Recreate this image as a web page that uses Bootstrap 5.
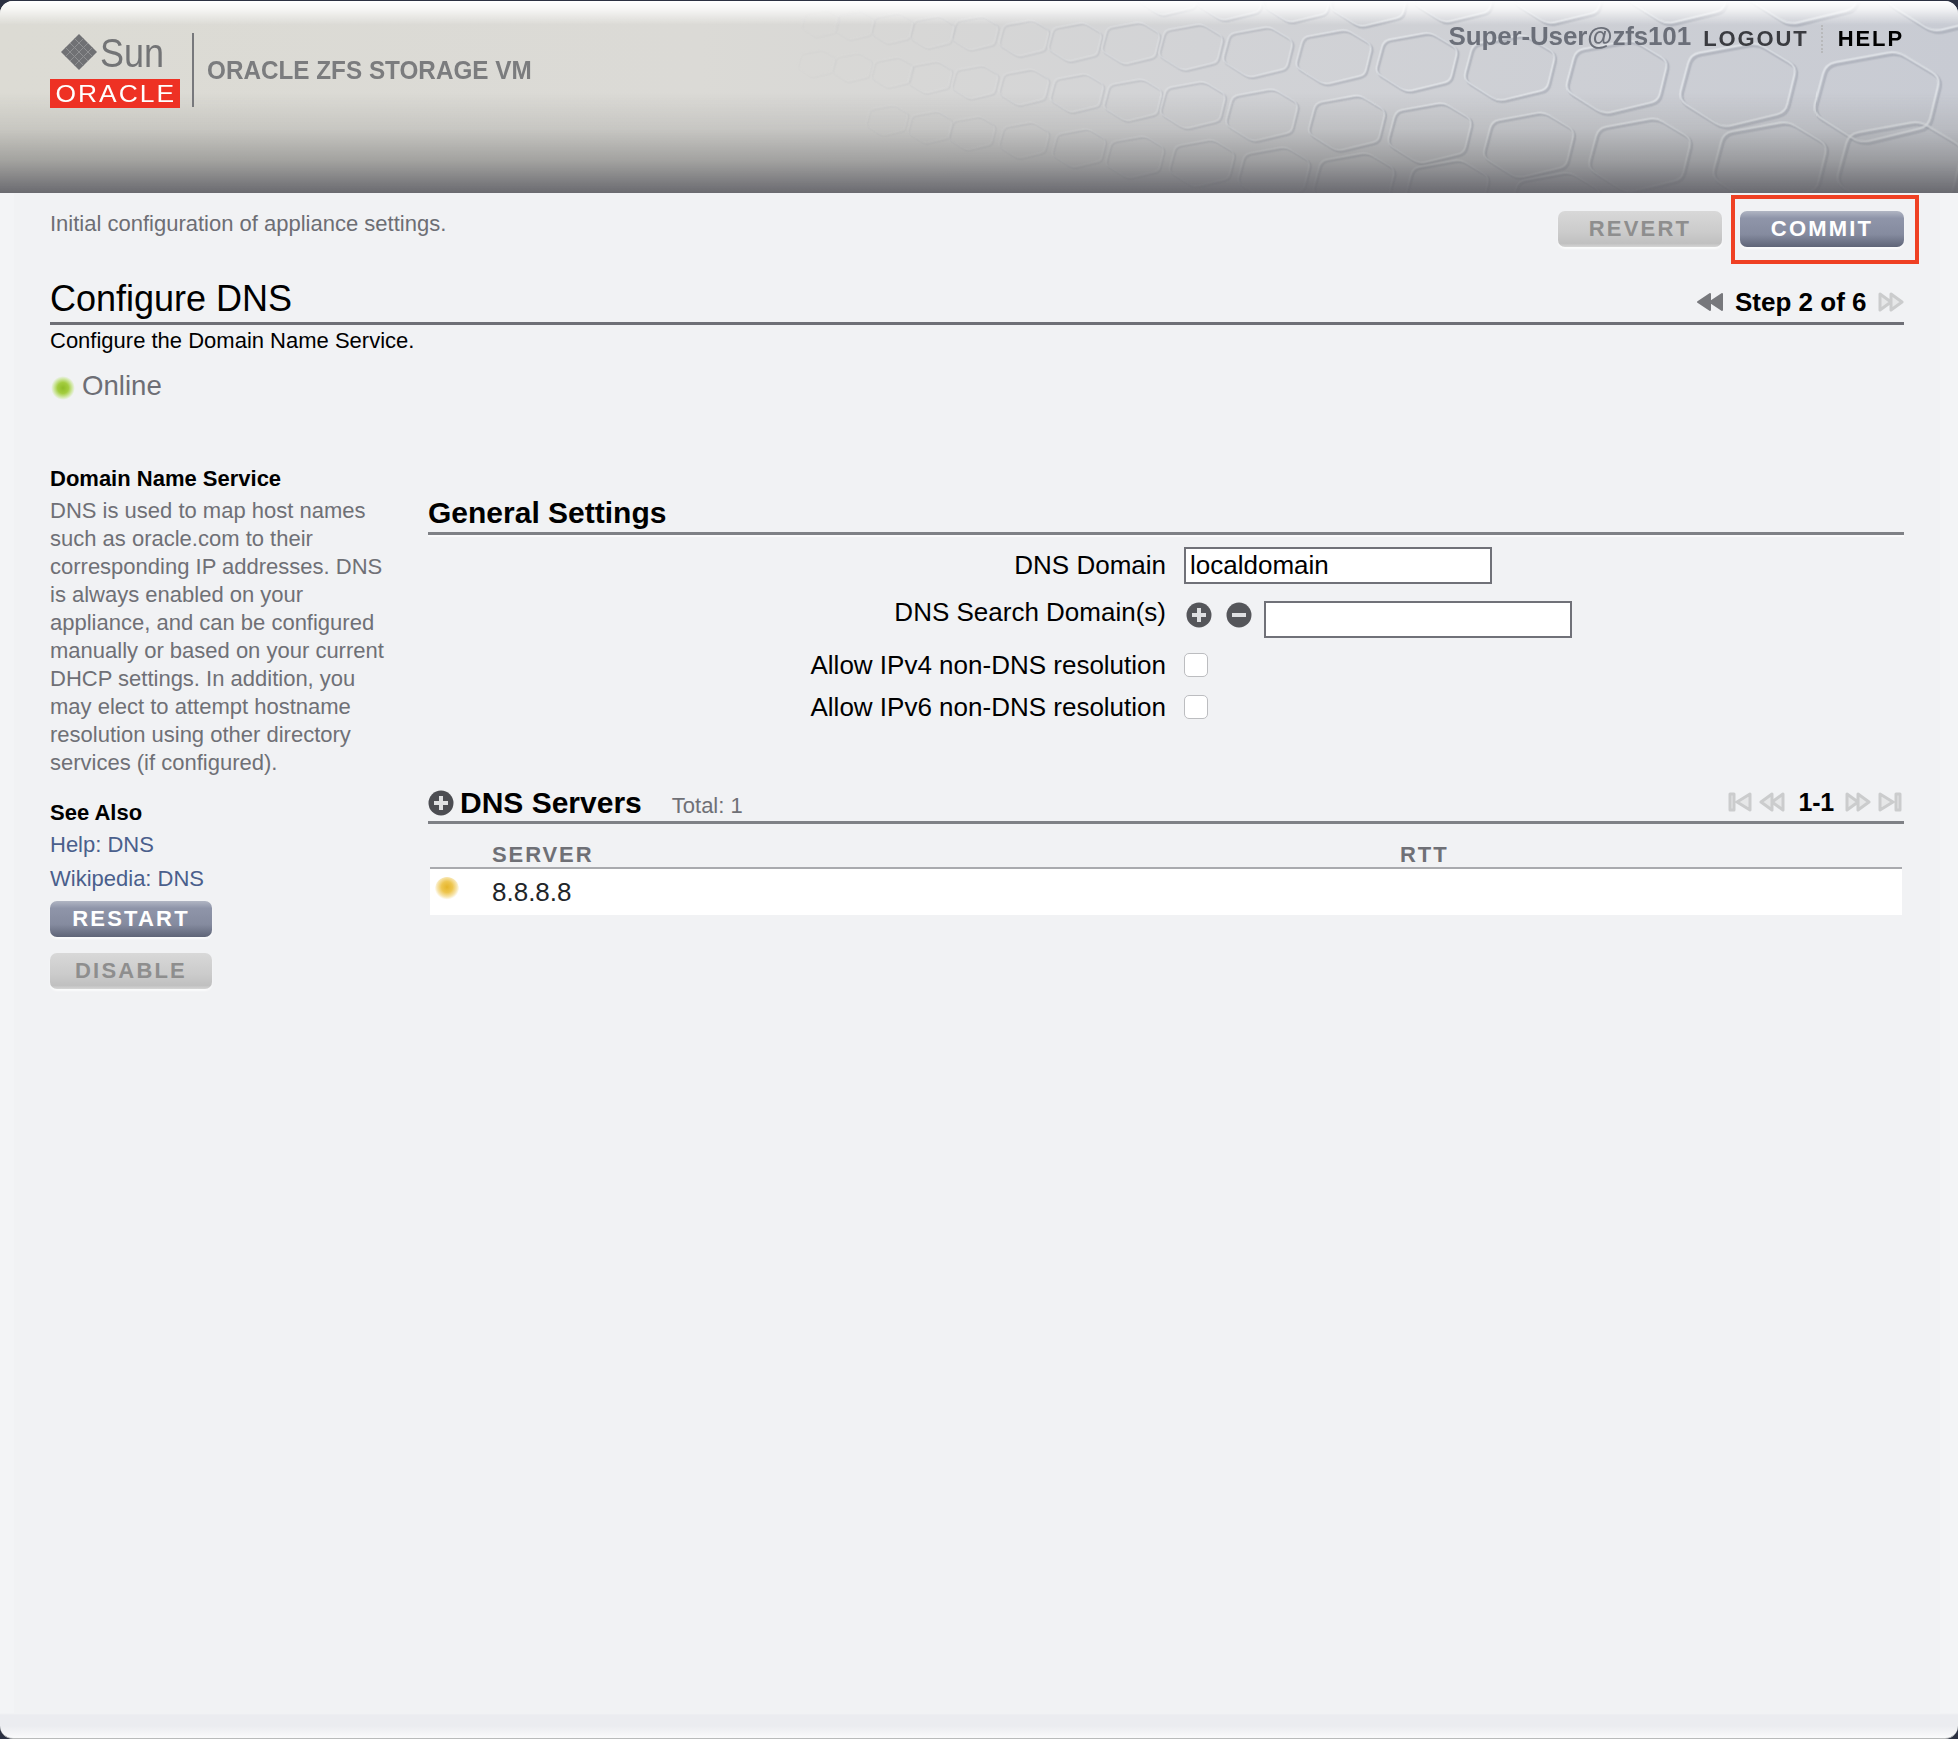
<!DOCTYPE html>
<html lang="en">
<head>
<meta charset="utf-8">
<title>Configure DNS</title>
<link href="https://cdn.jsdelivr.net/npm/bootstrap@5.3.0/dist/css/bootstrap.min.css" rel="stylesheet">
<style>
html,body{height:100%}
body{background:#2c3142;font-family:"Liberation Sans",Arial,sans-serif;color:#000;padding-top:1px}
.zs-page{width:1958px;height:1738px;background:linear-gradient(to bottom,#f3f4f6 0,#f3f4f6 1712px,#ebecf0 1714px,#ebecf0 1725px,#fafafb 1737px);border-radius:13px;border-bottom:1px solid #b9bbbb;overflow:hidden;position:relative}
.zs-head{height:192px;position:relative;overflow:hidden;background:linear-gradient(to right,#dcdbd4 0,#dbdad6 700px,#d2d3d6 1200px,#c8cbd3 1958px)}
.zs-head-art{position:absolute;left:0;top:-1px}
.zs-head::after{content:"";position:absolute;inset:0;background:linear-gradient(to bottom,#fff 0,rgba(255,255,255,.75) 8px,rgba(255,255,255,0) 24px,rgba(200,200,200,0) 92px,rgba(130,130,128,.22) 128px,rgba(110,110,110,.52) 160px,rgba(100,100,106,.95) 192px)}
.zs-head-in{position:relative;z-index:2;height:100%}
.zs-logo{position:absolute;left:50px;top:32px;width:130px}
.zs-diamond{position:absolute;left:10px;top:0}
.zs-sun{position:absolute;left:50px;top:-2px;font-size:40px;line-height:44px;color:#737476;transform:scaleX(.9);transform-origin:left top}
.zs-oracle{position:absolute;left:0;top:46px;width:130px;height:29px;background:#ee3124;color:#fff;font-size:24px;line-height:30px;text-align:center;overflow:hidden;padding-left:2px}
.zs-oracle span{display:inline-block;letter-spacing:1.8px;transform:scaleX(1.1)}
.zs-vbar{position:absolute;left:192px;top:32px;width:2px;height:74px;background:#77787c}
.zs-product{position:absolute;left:207px;top:51px;font-size:26px;line-height:36px;font-weight:700;color:#7b7c7e;white-space:nowrap;transform:scaleX(.934);transform-origin:left top}
.zs-user{position:absolute;right:267px;top:17px;font-size:26px;line-height:36px;color:#6b6f79;font-weight:700;letter-spacing:-.15px}
.zs-toplinks{position:absolute;right:54px;top:24px;display:flex;align-items:center;font-size:22px;line-height:28px;font-weight:700;letter-spacing:1.9px}
.zs-toplinks a{color:#3a3b40;text-decoration:none}
.zs-toplinks a+a{color:#000;margin-left:12px;padding-left:15px;border-left:2px dotted #b8b9bb}
.zs-panel{margin:0 18px 0 14px;height:1520px;background:#f1f2f4;padding:0 36px}
.zs-top{height:87px;padding-top:18px}
.zs-desc{font-size:22px;line-height:26px;color:#6d6e74}
.zs-btn{--bs-btn-padding-x:0;--bs-btn-padding-y:0;border:0;width:164px;height:36px;border-radius:7px;font-size:22px;line-height:36px;font-weight:700;letter-spacing:2.2px;text-align:center;box-shadow:0 2px 2px rgba(255,255,255,.7)}
.zs-btn-on,.zs-btn-on:hover{color:#fff;background:linear-gradient(to bottom,#b0b5c3 0,#8f95a9 20%,#858b9f 65%,#5f6578 100%)}
.zs-btn-off,.zs-btn-off:disabled{color:#8e8e8e;opacity:1;background:linear-gradient(to bottom,#d8d8d8 0,#cbcbcb 60%,#c0c0c0 90%,#d5d5d5 100%)}
.zs-hilite{position:relative;margin-left:18px}
.zs-redbox{position:absolute;left:-9px;right:-15px;top:-16px;bottom:-17px;border:4px solid #ef4023;pointer-events:none}
.zs-title{height:45px;border-bottom:3px solid #6e6f76;margin:0}
.zs-title h1{font-size:36px;line-height:42px;font-weight:400;margin:0 0 2px}
.zs-step{font-size:26px;line-height:32px;font-weight:700;padding-bottom:4px;gap:10px}
.zs-step svg:first-child{margin-right:-3px}
.zs-step span{margin:0 1.500px 0 4px}
.zs-sub{font-size:22px;line-height:32px}
.zs-online{height:40px;margin-top:9px;margin-bottom:-1px;font-size:27.6px;color:#6d6e75;gap:7px}
.zs-dot{width:24px;height:24px;flex:none;border-radius:50%}
.zs-online .zs-dot{margin:3px 0 0 1px}
.zs-dot-green{background:radial-gradient(circle at 50% 50%,#8fbc28 0,#a3cd3f 32%,#d4e9ad 56%,rgba(241,242,244,0) 70%)}
.zs-dot-yellow{background:radial-gradient(circle at 50% 42%,#e5b52a 0,#eec650 30%,#f7e6b2 54%,rgba(255,255,255,0) 68%)}
.zs-cols{margin-top:60px}
.zs-side{width:378px;flex:none;padding-right:40px;font-size:22px;line-height:28px}
.zs-side h6{font-size:22px;line-height:28px;font-weight:700;margin:0 0 4px;white-space:nowrap}
.zs-side p{color:#6f7076;margin:0;white-space:nowrap}
.zs-side h6.zs-see{margin:22px 0 1px}
.zs-side a{display:block;height:34px;line-height:34px;color:#4a5f8c;text-decoration:none}
.zs-side .btn{display:block;width:162px;margin-top:16px}
.zs-side a+.btn{margin-top:5px}
.zs-main{flex:1 1 auto;min-width:0;padding-top:30px}
.zs-sect{height:40px;padding-bottom:2px;border-bottom:3px solid #7f8186;box-shadow:0 2px 0 #fafafb;display:flex;align-items:center;font-size:30px;font-weight:700;line-height:36px;margin:0}
.zs-form{padding-top:12px;font-size:26px}
.zs-lbl{width:738px;flex:none;text-align:right;white-space:nowrap}
.zs-r{display:flex}
.zs-field{width:308px;height:37px;border:2px solid #707178;border-radius:0;background:#fff;padding:0 4px;font:26px/33px "Liberation Sans",Arial,sans-serif;color:#000;margin-left:18px;outline:0}
.zs-r-1{height:37px;align-items:center}
.zs-r-2{height:37px;margin-top:17px;align-items:flex-start}
.zs-r-2 .zs-lbl{line-height:22px}
.zs-r-2 .zs-field{margin-left:12px}
.zs-tools{margin-left:20px;gap:14px;display:flex;margin-top:1px}
.zs-r-3{height:38px;align-items:center}
.zs-r-3.zs-first{margin-top:8px}
.zs-r-3+.zs-r-3{margin-top:4px}
.zs-check{width:24px;height:24px;margin:0 0 0 18px;flex:none;border:1px solid #bcbdc0;border-radius:5px;background:#fff}
.zs-srv{margin-top:58px;height:40px;border-bottom:3px solid #7f8186;display:flex;align-items:center;font-size:30px;font-weight:700;line-height:36px}
.zs-srv .zs-icon-p{margin-right:6px}
.zs-total{font-size:22px;font-weight:400;color:#6f7076;margin-left:30px;padding-top:6px}
.zs-pager{margin-left:auto;font-size:25px;font-weight:700;display:flex;align-items:center;gap:6px;padding-right:2px;margin-top:-2px}
.zs-pager b{margin:0 5px 0 7px;letter-spacing:-.2px}
.zs-tbl{margin:0 2px;width:1472px;--bs-table-bg:transparent;table-layout:fixed}
.zs-tbl th{height:44px;padding:0;border-bottom:2px solid #a9aaae;font-size:22px;line-height:24px;font-weight:700;color:#6f7076;letter-spacing:1.9px;vertical-align:bottom}
.zs-tbl td{height:47px;background:#fff;border:0;padding:0;font-size:26px;vertical-align:middle}
.zs-tbl td .zs-dot{margin:-7px 0 0 5px}
.zs-c1{width:62px}
.zs-c2{width:908px}
</style>
</head>
<body>
<div class="zs-page">
  <header class="zs-head">
    <svg class="zs-head-art" width="1958" height="194" viewBox="0 0 1958 194" aria-hidden="true">
      <defs>
        <path id="zh" d="M10.200-40.400Q19-42 26.700-37.400L51.300-22.600Q59-18 57-9.300L50 19.300Q48 28 39.300 30L-6.300 41Q-15 43-22.600 38.100L-51.400 19.900Q-59 15-56.700 6.300L-49.300-21.300Q-47-30-38.200-31.600Z"/>
        <linearGradient id="zf" x1="0" x2="1" y1="0" y2="0"><stop offset="0" stop-color="#000"/><stop offset=".38" stop-color="#000"/><stop offset=".55" stop-color="#777"/><stop offset=".72" stop-color="#fff"/></linearGradient>
        <mask id="zm" maskUnits="userSpaceOnUse" x="0" y="0" width="1958" height="194"><rect width="1958" height="194" fill="url(#zf)"/></mask>
        <g id="zg" fill="none">
          <use href="#zh" transform="translate(1738,85)"/><use href="#zh" transform="translate(1877,97) scale(1.08)"/><use href="#zh" transform="translate(1617,77) scale(.87)"/><use href="#zh" transform="translate(1510,68) scale(.78)"/><use href="#zh" transform="translate(1417,62) scale(.7)"/><use href="#zh" transform="translate(1334,57) scale(.65)"/><use href="#zh" transform="translate(1258,52) scale(.6)"/><use href="#zh" transform="translate(1191,47) scale(.55)"/><use href="#zh" transform="translate(1131,43) scale(.5)"/><use href="#zh" transform="translate(1075,42) scale(.46)"/><use href="#zh" transform="translate(1024,38) scale(.43)"/><use href="#zh" transform="translate(975,33) scale(.4)"/><use href="#zh" transform="translate(932,32) scale(.38)"/><use href="#zh" transform="translate(892,28) scale(.36)"/><use href="#zh" transform="translate(854,25) scale(.34)"/><use href="#zh" transform="translate(820,23) scale(.32)"/>
          <use href="#zh" transform="translate(1900,167) scale(1.08)"/><use href="#zh" transform="translate(1770,163) scale(.98)"/><use href="#zh" transform="translate(1640,155) scale(.88)"/><use href="#zh" transform="translate(1529,145) scale(.78)"/><use href="#zh" transform="translate(1430,133) scale(.72)"/><use href="#zh" transform="translate(1347,123) scale(.66)"/><use href="#zh" transform="translate(1262,115) scale(.62)"/><use href="#zh" transform="translate(1193,105) scale(.56)"/><use href="#zh" transform="translate(1133,100) scale(.5)"/><use href="#zh" transform="translate(1077,93) scale(.46)"/><use href="#zh" transform="translate(1024,87) scale(.43)"/><use href="#zh" transform="translate(975,82) scale(.4)"/><use href="#zh" transform="translate(930,77) scale(.38)"/><use href="#zh" transform="translate(892,72) scale(.36)"/><use href="#zh" transform="translate(852,67) scale(.34)"/><use href="#zh" transform="translate(816,63) scale(.32)"/>
          <use href="#zh" transform="translate(1354,182) scale(.7)"/><use href="#zh" transform="translate(1274,173) scale(.62)"/><use href="#zh" transform="translate(1202,163) scale(.56)"/><use href="#zh" transform="translate(1135,157) scale(.5)"/><use href="#zh" transform="translate(1079,148) scale(.46)"/><use href="#zh" transform="translate(1024,140) scale(.43)"/><use href="#zh" transform="translate(972,133) scale(.4)"/><use href="#zh" transform="translate(930,127) scale(.38)"/><use href="#zh" transform="translate(887,120) scale(.36)"/><use href="#zh" transform="translate(1447,190) scale(.72)"/><use href="#zh" transform="translate(1555,205) scale(.78)"/>
          <use href="#zh" transform="translate(1231,-5) scale(.6)"/><use href="#zh" transform="translate(1169,-8) scale(.55)"/><use href="#zh" transform="translate(1298,-3) scale(.6)"/><use href="#zh" transform="translate(1370,-2) scale(.68)"/><use href="#zh" transform="translate(1455,-8) scale(.72)"/><use href="#zh" transform="translate(1560,-10) scale(.8)"/><use href="#zh" transform="translate(1680,-15) scale(.92)"/><use href="#zh" transform="translate(1805,-20) scale(1.05)"/><use href="#zh" transform="translate(1950,-15) scale(1.1)"/>
        </g>
      </defs>
      <g mask="url(#zm)">
        <use href="#zg" stroke="#8f93a0" stroke-opacity=".38" stroke-width="3.6" transform="translate(1.2,1.4)"/>
        <use href="#zg" stroke="#eef0f3" stroke-opacity=".62" stroke-width="2.2" transform="translate(-.6,-.6)"/>
      </g>
    </svg>
    <div class="zs-head-in">
      <div class="zs-logo">
        <svg class="zs-diamond" width="38" height="38" viewBox="0 0 38 38" aria-hidden="true"><path d="M19 1 37 19 19 37 1 19Z" fill="#707174"/><path d="M10 10 28 28M28 10 10 28M14.500 5.500 32.500 23.500M23.500 5.500 5.500 23.500M5.500 14.500 23.500 32.500M32.500 14.500 14.500 32.500" stroke="#8f9092" stroke-width="1" fill="none"/></svg>
        <span class="zs-sun">Sun</span>
        <span class="zs-oracle"><span>ORACLE</span></span>
      </div>
      <span class="zs-vbar"></span>
      <span class="zs-product">ORACLE ZFS STORAGE VM</span>
      <span class="zs-user">Super-User@zfs101</span>
      <nav class="zs-toplinks"><a href="#">LOGOUT</a><a href="#">HELP</a></nav>
    </div>
  </header>
  <div class="zs-panel">
    <div class="zs-top d-flex justify-content-between align-items-start">
      <div class="zs-desc">Initial configuration of appliance settings.</div>
      <div class="d-flex">
        <button class="btn zs-btn zs-btn-off" disabled>REVERT</button>
        <div class="zs-hilite"><button class="btn zs-btn zs-btn-on">COMMIT</button><span class="zs-redbox"></span></div>
      </div>
    </div>
    <div class="zs-title d-flex justify-content-between align-items-end">
      <h1>Configure DNS</h1>
      <div class="zs-step d-flex align-items-center">
        <svg width="28" height="20" viewBox="0 0 28 20" aria-hidden="true"><path d="M14 2 2 10 14 18ZM26 2 14 10 26 18Z" fill="#77787c" stroke="#77787c" stroke-width="2" stroke-linejoin="round"/></svg>
        <span>Step 2 of 6</span>
        <svg width="26" height="20" viewBox="0 0 26 20" aria-hidden="true"><path d="M2 2 13 10 2 18ZM13 2 24 10 13 18Z" fill="#e6e7e8" stroke="#cbcccd" stroke-width="3" stroke-linejoin="round"/></svg>
      </div>
    </div>
    <div class="zs-sub">Configure the Domain Name Service.</div>
    <div class="zs-online d-flex align-items-center"><span class="zs-dot zs-dot-green"></span>Online</div>
    <div class="zs-cols d-flex">
      <aside class="zs-side">
        <h6>Domain Name Service</h6>
        <p>DNS is used to map host names<br>such as oracle.com to their<br>corresponding IP addresses. DNS<br>is always enabled on your<br>appliance, and can be configured<br>manually or based on your current<br>DHCP settings. In addition, you<br>may elect to attempt hostname<br>resolution using other directory<br>services (if configured).</p>
        <h6 class="zs-see">See Also</h6>
        <a href="#">Help: DNS</a>
        <a href="#">Wikipedia: DNS</a>
        <button class="btn zs-btn zs-btn-on">RESTART</button>
        <button class="btn zs-btn zs-btn-off" disabled>DISABLE</button>
      </aside>
      <main class="zs-main">
        <h2 class="zs-sect">General Settings</h2>
        <div class="zs-form">
          <div class="zs-r zs-r-1"><label class="zs-lbl">DNS Domain</label><input class="zs-field" value="localdomain"></div>
          <div class="zs-r zs-r-2"><label class="zs-lbl">DNS Search Domain(s)</label>
            <span class="zs-tools">
              <svg width="26" height="26" viewBox="0 0 26 26" aria-hidden="true"><circle cx="13" cy="13" r="12.500" fill="#55565a"/><path d="M13 6V20M6 13H20" stroke="#dfe0e2" stroke-width="4"/></svg>
              <svg width="26" height="26" viewBox="0 0 26 26" aria-hidden="true"><circle cx="13" cy="13" r="12.500" fill="#55565a"/><path d="M6 13H20" stroke="#dfe0e2" stroke-width="4"/></svg>
            </span>
            <input class="zs-field" value="">
          </div>
          <div class="zs-r zs-r-3 zs-first"><label class="zs-lbl">Allow IPv4 non-DNS resolution</label><span class="zs-check"></span></div>
          <div class="zs-r zs-r-3"><label class="zs-lbl">Allow IPv6 non-DNS resolution</label><span class="zs-check"></span></div>
        </div>
        <div class="zs-srv">
          <svg class="zs-icon-p" width="26" height="26" viewBox="0 0 26 26" aria-hidden="true"><circle cx="13" cy="13" r="12.500" fill="#4c4d52"/><path d="M13 6V20M6 13H20" stroke="#dfe0e2" stroke-width="4"/></svg>
          DNS Servers<span class="zs-total">Total: 1</span>
          <span class="zs-pager">
            <svg width="25" height="20" viewBox="0 0 25 20" aria-hidden="true"><path d="M2 2H6V18H2ZM22 2 9 10 22 18Z" fill="#e6e7e8" stroke="#cbcccd" stroke-width="3" stroke-linejoin="round"/></svg>
            <svg width="26" height="20" viewBox="0 0 26 20" aria-hidden="true"><path d="M13 2 2 10 13 18ZM24 2 13 10 24 18Z" fill="#e6e7e8" stroke="#cbcccd" stroke-width="3" stroke-linejoin="round"/></svg>
            <b>1-1</b>
            <svg width="26" height="20" viewBox="0 0 26 20" aria-hidden="true"><path d="M2 2 13 10 2 18ZM13 2 24 10 13 18Z" fill="#e6e7e8" stroke="#cbcccd" stroke-width="3" stroke-linejoin="round"/></svg>
            <svg width="25" height="20" viewBox="0 0 25 20" aria-hidden="true"><path d="M3 2 16 10 3 18ZM19 2H23V18H19Z" fill="#e6e7e8" stroke="#cbcccd" stroke-width="3" stroke-linejoin="round"/></svg>
          </span>
        </div>
        <table class="table zs-tbl mb-0">
          <colgroup><col class="zs-c1"><col class="zs-c2"><col></colgroup>
          <thead><tr><th></th><th>SERVER</th><th>RTT</th></tr></thead>
          <tbody><tr><td><span class="zs-dot zs-dot-yellow d-block"></span></td><td>8.8.8.8</td><td></td></tr></tbody>
        </table>
      </main>
    </div>
  </div>
</div>
<script src="https://cdn.jsdelivr.net/npm/bootstrap@5.3.0/dist/js/bootstrap.bundle.min.js"></script>
</body>
</html>
